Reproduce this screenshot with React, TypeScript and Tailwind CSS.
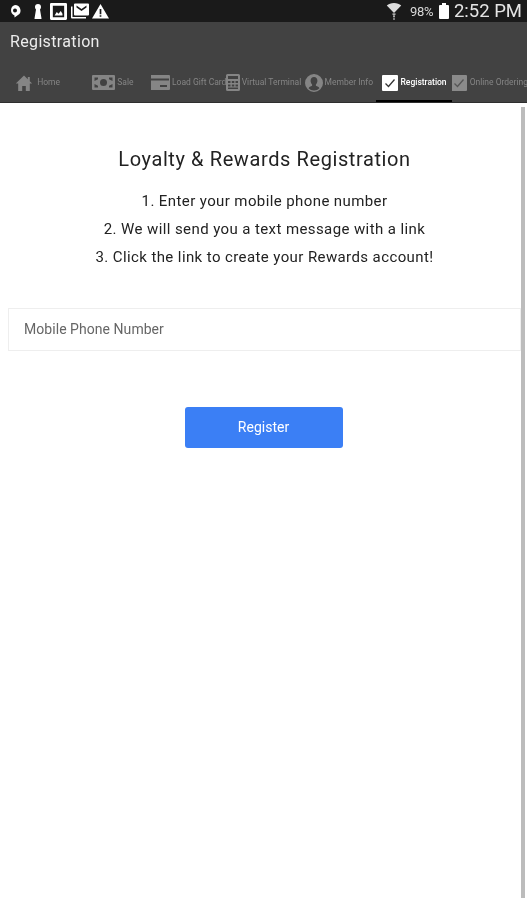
import { type ReactNode } from "react";

const tabIcons: Record<string, ReactNode> = {
  home: (
    <svg viewBox="0 0 18 18" className="h-[18px] w-[18px]" fill="currentColor">
      <path d="M9 1.500 0.800 9.600h2.400V17h4v-5h3.600v5h4V9.600h2.400l-2.400-2.400V3h-2v2.200z" />
    </svg>
  ),
  sale: (
    <svg viewBox="0 0 23 15" className="h-[15px] w-[23px]" fill="currentColor">
      <path
        fillRule="evenodd"
        d="M1 0h21a1 1 0 0 1 1 1v13a1 1 0 0 1-1 1H1a1 1 0 0 1-1-1V1a1 1 0 0 1 1-1zm1.500 2.500v3.500l3.500-1.800v-1.700zm0 6.500v3.500h3.500v-1.700zm18-6.500h-3.500v1.700l3.500 1.800zm0 6.500-3.500 1.800v1.700h3.500zM11.500 4a3.500 3.500 0 1 0 0 7 3.500 3.500 0 0 0 0-7z"
      />
    </svg>
  ),
  card: (
    <svg viewBox="0 0 20 15" className="h-[15px] w-[20px]" fill="currentColor">
      <path
        fillRule="evenodd"
        d="M1 0h18a1 1 0 0 1 1 1v13a1 1 0 0 1-1 1H1a1 1 0 0 1-1-1V1a1 1 0 0 1 1-1zm0 3.500v2h18v-2zM10 10v2h7v-2z"
      />
    </svg>
  ),
  calc: (
    <svg viewBox="0 0 14 17" className="h-[17px] w-[14px]" fill="currentColor">
      <path
        fillRule="evenodd"
        d="M1.500 0h11A1.500 1.500 0 0 1 14 1.500v14a1.500 1.500 0 0 1-1.500 1.500h-11A1.500 1.500 0 0 1 0 15.500v-14A1.500 1.500 0 0 1 1.500 0zM2 2v3h10V2zm0 5v2h2.500V7zm3.800 0v2h2.500V7zm3.700 0v2H12V7zM2 10.500v2h2.500v-2zm3.800 0v2h2.500v-2zm3.700 0v2H12v-2zM2 13.500v1.500h10v-1.500z"
      />
    </svg>
  ),
  member: (
    <svg viewBox="0 0 18 18" className="h-[18px] w-[18px]" fill="currentColor">
      <path
        fillRule="evenodd"
        d="M9 0a9 9 0 1 1 0 18A9 9 0 0 1 9 0zm0 3C6.900 3 5.600 4.700 5.600 6.800c0 1.500.6 2.900 1.500 3.700v1.300c-1.500.6-3 1.200-3.500 2.400A7 7 0 0 0 9 16.500a7 7 0 0 0 5.400-2.300c-.5-1.200-2-1.800-3.500-2.400v-1.300c.9-.8 1.500-2.200 1.500-3.700C12.400 4.700 11.100 3 9 3z"
      />
    </svg>
  ),
};

function CheckIcon({ active }: { active: boolean }) {
  return (
    <span
      className={
        "flex h-4 w-4 shrink-0 items-center justify-center rounded-[1px] " +
        (active ? "bg-white" : "bg-[#8a8a8a]")
      }
    >
      <svg
        viewBox="0 0 16 16"
        className="h-4 w-4"
        fill="none"
        stroke={active ? "#333333" : "#555555"}
        strokeWidth="1.300"
      >
        <path d="M3.500 8.500 6.500 11.500 12.500 4.500" />
      </svg>
    </span>
  );
}

const tabs = [
  { label: "Home", icon: "home", gap: "gap-1" },
  { label: "Sale", icon: "sale", gap: "gap-0.5" },
  { label: "Load Gift Card", icon: "card", gap: "gap-0.5" },
  { label: "Virtual Terminal", icon: "calc", gap: "gap-0.5" },
  { label: "Member Info", icon: "member", gap: "gap-0.5" },
  { label: "Registration", icon: "check", active: true, gap: "gap-[3px]" },
  { label: "Online Ordering", icon: "check", gap: "gap-[3px]" },
];

function StatusBar() {
  return (
    <div className="flex h-[22px] items-center justify-between bg-[#1a1a1a] pl-[8px] pr-[5px] text-white">
      <div className="flex items-center">
        <svg viewBox="0 0 14 14" className="h-[14px] w-[14px]" fill="white">
          <path
            fillRule="evenodd"
            d="M7 1a5.500 5.500 0 0 1 3 10.100L6.500 13.500V11.400A5.500 5.500 0 0 1 7 1zm0 3.500a2 2 0 1 0 0 4 2 2 0 0 0 0-4z"
          />
        </svg>
        <svg viewBox="0 0 10 15" className="ml-[11px] h-[15px] w-[10px]" fill="white">
          <path d="M5 0a3 3 0 0 1 3 3c0 1.200-.5 2-1 2.600L8.500 14.500a.5.5 0 0 1-.5.500H2a.5.5 0 0 1-.5-.5L3 5.600C2.500 5 2 4.200 2 3a3 3 0 0 1 3-3z" />
        </svg>
        <svg viewBox="0 0 15 15" className="ml-[7px] h-[17px] w-[17px]" fill="white">
          <path
            fillRule="evenodd"
            d="M1 0h13a1 1 0 0 1 1 1v13a1 1 0 0 1-1 1H1a1 1 0 0 1-1-1V1a1 1 0 0 1 1-1zm1.500 2.500v10h10v-10zM4 11l2-3 1.500 1.500L9.500 7 11 9.500V11z"
          />
        </svg>
        <svg viewBox="0 0 18 15" className="ml-[4px] h-[16px] w-[18px]" fill="white">
          <path
            fillRule="evenodd"
            d="M4 0h13a1 1 0 0 1 1 1v10a1 1 0 0 1-1 1H4a1 1 0 0 1-1-1V1a1 1 0 0 1 1-1zm1.500 2v2l5 3.500 5-3.500V2l-5 3.500zM0 3h1.500v10.500H15V15H1a1 1 0 0 1-1-1z"
          />
        </svg>
        <svg viewBox="0 0 16 14" className="ml-[3px] h-[16px] w-[17px]" fill="white">
          <path
            fillRule="evenodd"
            d="M8 0.500 16 14H0zM7.200 5v5h1.600V5zm0 6v1.500h1.600V11z"
          />
        </svg>
      </div>
      <div className="flex items-center">
        <svg viewBox="0 0 16 18" className="mr-[8px] h-[18px] w-[16px]" fill="#dddddd">
          <path d="M8 1C5 1 2.500 2 .8 3.600L8 11l7.200-7.400C13.500 2 11 1 8 1z" />
          <path d="M6.500 11.500h3v1.200h-3zM7 13.500h2v1.200H7zM7.500 15.500h1V18h-1z" />
        </svg>
        <span className="w-[27px] text-[13px] leading-none tracking-[-0.2px] text-[#d8d8d8]">
          98%
        </span>
        <span className="relative mt-[2px] ml-[2px] mr-[5px] h-[14px] w-[10px] rounded-[1px] bg-white">
          <span className="absolute -top-[2px] left-[3px] h-[2px] w-[4px] bg-white" />
        </span>
        <span className="text-[18.5px] leading-none text-[#e4e4e4]">2:52 PM</span>
      </div>
    </div>
  );
}

export default function App() {
  return (
    <div className="relative flex h-[900px] w-[527px] flex-col overflow-hidden bg-white blur-[0.4px] [font-family:'Roboto',sans-serif]">
      <StatusBar />

      <header className="h-[81px] border-b border-[#2e2e2e] bg-[#424242]">
        <h1 className="pl-[10px] pt-[10px] text-[16px] leading-[20px] tracking-[0.35px] text-[#ececec]">
          Registration
        </h1>
        <nav className="mt-[13px] grid h-[37px] grid-cols-7">
          {tabs.map((tab) => (
            <div
              key={tab.label}
              className={
                "flex items-center justify-center overflow-hidden " +
                tab.gap +
                (tab.active
                  ? " border-b-2 border-black text-white"
                  : " border-b-2 border-transparent text-[#858585]")
              }
            >
              {tab.icon === "check" ? (
                <CheckIcon active={!!tab.active} />
              ) : (
                <span className="shrink-0">{tabIcons[tab.icon]}</span>
              )}
              <span
                className={
                  "text-[8.5px] leading-none whitespace-nowrap " +
                  (tab.active ? "font-medium" : "")
                }
              >
                {tab.label}
              </span>
            </div>
          ))}
        </nav>
      </header>

      <main className="flex-1">
        <h2 className="mt-[44px] pl-[2px] text-center text-[20px] leading-[24px] tracking-[0.6px] text-[#222222]">
          Loyalty &amp; Rewards Registration
        </h2>
        <ol className="mt-[16px] pl-[2px] text-center text-[15px] leading-[28px] tracking-[0.4px] text-[#222222]">
          <li>1. Enter your mobile phone number</li>
          <li>2. We will send you a text message with a link</li>
          <li>3. Click the link to create your Rewards account!</li>
        </ol>
        <div className="mt-[37px] ml-[8px] mr-[6px] flex h-[43px] items-center border border-[#eeeeee] bg-white pl-[15px] text-[14px] tracking-[0.05px] text-[#666666]">
          Mobile Phone Number
        </div>
        <button className="mx-auto mt-[56px] flex h-[41px] w-[158px] items-center justify-center rounded-[3px] bg-[#3b7ff5] text-[14px] text-white">
          Register
        </button>
      </main>

      {/* scroll indicator sits over the page content */}
      <div className="absolute top-[107px] bottom-[2px] right-[2px] w-[4px] bg-[#bcbcbc]" />
    </div>
  );
}
